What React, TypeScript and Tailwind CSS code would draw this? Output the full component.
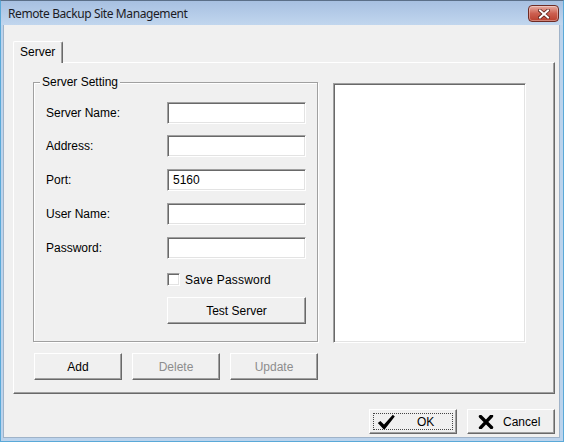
import React from 'react';

const raised =
  'bg-[#f0f0f0] border border-t-white border-l-white border-r-[#696969] border-b-[#696969] shadow-[inset_-1px_-1px_0_#a0a0a0]';
const sunken =
  'bg-white border border-t-[#a0a0a0] border-l-[#a0a0a0] border-r-white border-b-white shadow-[inset_1px_1px_0_#696969,inset_-1px_-1px_0_#e3e3e3]';

function Btn({ children, className = '', disabled = false }: { children: React.ReactNode; className?: string; disabled?: boolean }) {
  return (
    <button
      className={`${raised} h-[27px] w-[88px] flex items-center justify-center text-[12px] ${disabled ? 'text-[#8d8d8d]' : 'text-black'} ${className}`}
    >
      {children}
    </button>
  );
}

function Row({ label, value = '', className = '' }: { label: string; value?: string; className?: string }) {
  return (
    <div className={`flex items-center h-[22px] ${className}`}>
      <span className="w-[121px] text-[12px]">{label}</span>
      <div className={`${sunken} w-[139px] h-[22px] flex items-center pl-[5px] text-[12px]`}>{value}</div>
    </div>
  );
}

const CheckIcon = () => (
  <svg width="18" height="16" viewBox="0 0 18 16">
    <polygon points="0.8,9 3.4,7 7,10.6 15.8,0.8 17.8,2.6 7.8,15.2 6.6,15.2" fill="#000" />
  </svg>
);

const CrossIcon = () => (
  <svg width="16" height="14" viewBox="0 0 16 14">
    <path d="M2.5 1.5 L13.5 12.5 M13.5 1 L2.5 12.8" stroke="#000" strokeWidth="3.4" strokeLinecap="round" />
  </svg>
);

export default function App() {
  return (
    <div className="w-[564px] h-[442px] flex flex-col bg-[#bcd3ec] border border-[#5aa9d8] border-t-[#5b6f88] font-['Liberation_Sans',Arial,sans-serif] text-black overflow-hidden">
      {/* title bar */}
      <div className="h-[24px] flex items-start justify-between pl-[7px] pr-[4px] bg-linear-to-b from-[#a7c0e1] to-[#c1d6ee]">
        <span className="mt-[5px] text-[12px] tracking-[-0.4px] text-[#1b1b24] font-['Noto_Sans',sans-serif] leading-[16px]">Remote Backup Site Management</span>
        <div className="mt-[4px] w-[31px] h-[17px] rounded-[4px] border border-[#6e2b24] bg-linear-to-b from-[#e6aca2] via-[#cc5f50] to-[#b93f2e] flex items-center justify-center shadow-[inset_0_0_0_1px_rgba(255,255,255,0.35)]">
          <svg width="12" height="10" viewBox="0 0 12 10">
            <path d="M2 1.5 L10 8.5 M10 1.5 L2 8.5" stroke="#5a1f18" strokeWidth="3.6" strokeLinecap="square" />
            <path d="M2 1.5 L10 8.5 M10 1.5 L2 8.5" stroke="#fff" strokeWidth="2" strokeLinecap="square" />
          </svg>
        </div>
      </div>

      {/* client area */}
      <div className="flex-1 ml-[2px] mr-[3px] mb-[3px] bg-[#f0f0f0] border border-t-0 border-[#9fb3c9] flex flex-col pt-[16px] pl-[9px]">
        {/* tab header */}
        <div className="flex">
          <div className="relative z-10 -mb-[1px] h-[22px] w-[50px] pl-[6px] pb-[1px] flex items-center bg-[#f0f0f0] border border-b-0 border-t-white border-l-white border-r-[#696969] rounded-t-[2px] shadow-[inset_-1px_0_0_#a0a0a0] text-[12px]">
            Server
          </div>
        </div>

        {/* tab panel */}
        <div className={`${raised} w-[542px] h-[332px] pt-[19px] pl-[19px] flex`}>
          <div className="flex flex-col">
            {/* group box */}
            <div className="relative w-[285px] h-[260px] border border-[#a0a0a0] shadow-[inset_1px_1px_0_white,1px_1px_0_white] pt-[19px] pl-[12px]">
              <span className="absolute -top-[8px] left-[6px] px-[2px] bg-[#f0f0f0] text-[12px] leading-[14px]">Server Setting</span>
              <Row label="Server Name:" />
              <Row label="Address:" className="mt-[11px]" />
              <Row label="Port:" value="5160" className="mt-[12px]" />
              <Row label="User Name:" className="mt-[12px]" />
              <Row label="Password:" className="mt-[12px]" />
              <div className="mt-[14px] ml-[121px] flex items-center h-[13px]">
                <div className={`${sunken} w-[13px] h-[13px]`} />
                <span className="ml-[5px] text-[12px] tracking-[0.2px]">Save Password</span>
              </div>
              <Btn className="mt-[11px] ml-[121px] w-[139px]">Test Server</Btn>
            </div>
            <div className="mt-[11px] ml-[1px] flex gap-[10px]">
              <Btn>Add</Btn>
              <Btn disabled>Delete</Btn>
              <Btn disabled>Update</Btn>
            </div>
          </div>
          <div className={`${sunken} ml-[15px] mt-[1px] w-[193px] h-[260px]`} />
        </div>

        {/* dialog buttons */}
        <div className="mt-[15px] self-end mr-[4px] flex gap-[10px]">
          <button className={`${raised} relative h-[25px] w-[88px] flex items-center pl-[7px] text-[12px]`}>
            <span className="absolute inset-[3px] border border-dotted border-[#444]" />
            <CheckIcon />
            <span className="ml-[22px]">OK</span>
          </button>
          <button className={`${raised} h-[25px] w-[88px] flex items-center pl-[10px] text-[12px]`}>
            <CrossIcon />
            <span className="ml-[9px]">Cancel</span>
          </button>
        </div>
      </div>
    </div>
  );
}
